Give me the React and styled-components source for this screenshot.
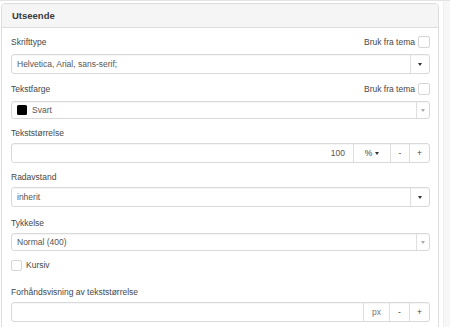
import React from 'react'
import styled, { createGlobalStyle } from 'styled-components'

const Global = createGlobalStyle`
  html, body {
    margin: 0;
    background: #fff;
    font-family: "Liberation Sans", Arial, Helvetica, sans-serif;
    color: #333;
  }
`;

const Page = styled.div`
  display: flex;
  height: 327px;
  overflow: hidden;
  border-top: 1px solid #e3e3e3;
`;

const Panel = styled.section`
  width: 436px;
  margin: 2px 0 0 1px;
  border: 1px solid #ddd;
  border-radius: 4px;
  background: #fff;
  align-self: flex-start;
`;

const Aside = styled.div`
  flex: 1;
  margin-left: 4px;
  background: #f7f7f7;
  border-left: 1px solid #efefef;
`;

const Header = styled.div`
  height: 23px;
  display: flex;
  align-items: center;
  padding: 0 10px;
  background: #f5f5f5;
  border-bottom: 1px solid #ddd;
  border-radius: 4px 4px 0 0;
  font-size: 9.5px;
  font-weight: bold;
  color: #3a3a3a;
`;

const Body = styled.div`
  padding: 8px 8px 10px 9px;
`;

const Group = styled.div`
  margin-bottom: ${p => p.$gap ?? 9}px;
`;

const LabelRow = styled.div`
  display: flex;
  align-items: center;
  justify-content: space-between;
  height: ${p => (p.$tall ? 12 : 10)}px;
  margin-bottom: ${p => (p.$tall ? 6 : 5)}px;
  font-size: 8.5px;
  color: #474747;
`;

const Theme = styled.label`
  display: flex;
  align-items: center;
  gap: 3px;
`;

const Box = styled.span`
  display: inline-block;
  width: ${p => p.$size || 9}px;
  height: ${p => p.$size || 9}px;
  border: 1px solid #d6d6d6;
  border-radius: 2px;
  background: #fff;
`;

const Field = styled.div`
  display: flex;
  height: ${p => p.$h || 20}px;
  box-sizing: border-box;
  border: 1px solid #d9d9d9;
  border-radius: 3px;
  background: #fff;
  box-shadow: inset 0 1px 1px rgba(0, 0, 0, 0.04);
  font-size: 8.5px;
  color: #555;
  overflow: hidden;
`;

const Value = styled.div`
  flex: 1;
  display: flex;
  align-items: center;
  justify-content: ${p => (p.$right ? 'flex-end' : 'flex-start')};
  gap: 5px;
  padding: 0 ${p => (p.$right ? 8 : 5)}px 0 5px;
`;

const Addon = styled.div`
  width: ${p => p.$w}px;
  display: flex;
  align-items: center;
  justify-content: center;
  gap: 3px;
  border-left: 1px solid #dedede;
  color: ${p => (p.$muted ? '#777' : '#444')};
`;

const Caret = styled.span`
  width: 0;
  height: 0;
  border-top: 3px solid ${p => (p.$soft ? '#aaa' : '#333')};
  border-left: ${p => (p.$soft ? 2 : 2.5)}px solid transparent;
  border-right: ${p => (p.$soft ? 2 : 2.5)}px solid transparent;
`;

const Swatch = styled.span`
  width: 10px;
  height: 10px;
  border-radius: 1.5px;
  background: #000;
`;

const CheckRow = styled.label`
  display: flex;
  align-items: center;
  gap: 4px;
  height: 12px;
  margin-bottom: ${p => p.$after}px;
  font-size: 8.5px;
  color: #474747;
`;

function ThemeToggle() {
  return (
    <Theme>
      Bruk fra tema <Box $size={10} />
    </Theme>
  )
}

export default function App() {
  return (
    <>
      <Global />
      <Page>
        <Panel>
          <Header>Utseende</Header>
          <Body>
            <Group>
              <LabelRow $tall>
                <span>Skrifttype</span>
                <ThemeToggle />
              </LabelRow>
              <Field>
                <Value>Helvetica, Arial, sans-serif;</Value>
                <Addon $w={18}><Caret /></Addon>
              </Field>
            </Group>

            <Group>
              <LabelRow $tall>
                <span>Tekstfarge</span>
                <ThemeToggle />
              </LabelRow>
              <Field $h={18}>
                <Value><Swatch />Svart</Value>
                <Addon $w={12}><Caret $soft /></Addon>
              </Field>
            </Group>

            <Group>
              <LabelRow>
                <span>Tekststørrelse</span>
              </LabelRow>
              <Field>
                <Value $right>100</Value>
                <Addon $w={36}>% <Caret /></Addon>
                <Addon $w={18}>-</Addon>
                <Addon $w={19}>+</Addon>
              </Field>
            </Group>

            <Group $gap={11}>
              <LabelRow>
                <span>Radavstand</span>
              </LabelRow>
              <Field>
                <Value>inherit</Value>
                <Addon $w={18}><Caret /></Addon>
              </Field>
            </Group>

            <Group $gap={8}>
              <LabelRow>
                <span>Tykkelse</span>
              </LabelRow>
              <Field $h={18}>
                <Value>Normal (400)</Value>
                <Addon $w={12}><Caret $soft /></Addon>
              </Field>
            </Group>

            <CheckRow $after={16}>
              <Box />Kursiv
            </CheckRow>

            <Group>
              <LabelRow>
                <span>Forhåndsvisning av tekststørrelse</span>
              </LabelRow>
              <Field>
                <Value />
                <Addon $w={25} $muted>px</Addon>
                <Addon $w={19}>-</Addon>
                <Addon $w={19}>+</Addon>
              </Field>
            </Group>
          </Body>
        </Panel>
        <Aside />
      </Page>
    </>
  )
}
